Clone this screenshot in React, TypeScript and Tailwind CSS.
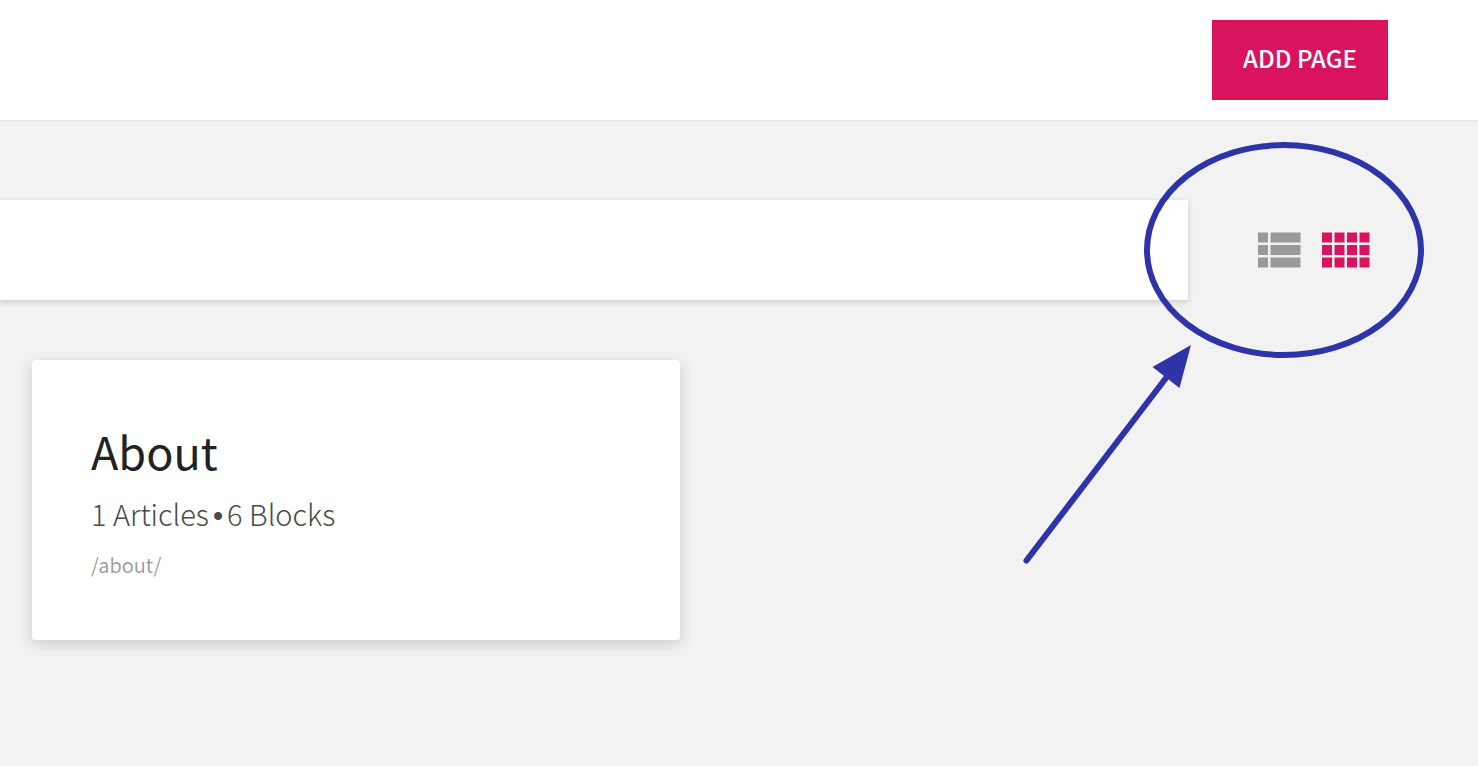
const pages = [
  { title: "About", articles: 1, blocks: 6, path: "/about/" },
];

function ListIcon() {
  return (
    <svg viewBox="0 0 24 24" className="size-[60px] fill-current" aria-hidden="true">
      <path d="M4 14h4v-4H4v4zm0 5h4v-4H4v4zM4 9h4V5H4v4zm5 5h12v-4H9v4zm0 5h12v-4H9v4zM9 5v4h12V5H9z" />
    </svg>
  );
}

function GridIcon() {
  return (
    <svg viewBox="0 0 24 24" className="size-[60px] fill-current" aria-hidden="true">
      <path
        transform="translate(0.2 0)"
        d="M3 9h4V5H3v4zm0 5h4v-4H3v4zm5 0h4v-4H8v4zm5 0h4v-4h-4v4zM8 9h4V5H8v4zm5-4v4h4V5h-4zm5 9h4v-4h-4v4zM3 19h4v-4H3v4zm5 0h4v-4H8v4zm5 0h4v-4h-4v4zm5 0h4v-4h-4v4zm0-14v4h4V5h-4z"
      />
    </svg>
  );
}

/* Circle and arrow pointing out the view switcher */
function Annotation() {
  return (
    <svg
      viewBox="0 0 420 440"
      className="absolute top-[10px] right-12 w-[420px] h-[440px] pointer-events-none"
      fill="none"
      aria-hidden="true"
    >
      <ellipse cx="274" cy="120" rx="137" ry="105" stroke="#2e34a8" strokeWidth="6" />
      <path d="M16.5 430.5L156 248" stroke="#2e34a8" strokeWidth="6" strokeLinecap="round" />
      <path d="M181 215L142.500 237L169.500 258z" fill="#2e34a8" />
    </svg>
  );
}

export default function App() {
  return (
    <div className="min-h-screen bg-[#f2f2f2] font-['Noto_Sans_CJK_SC',sans-serif]">
      <header className="flex h-[120px] items-center justify-end bg-white pr-[90px] shadow-[0_2px_0_#e9e9e9]">
        <button
          type="button"
          className="h-20 w-44 bg-[#da135e] pb-1 text-2xl font-medium text-white"
        >
          ADD PAGE
        </button>
      </header>

      <main className="relative pt-20">
        <div className="flex items-center gap-[60px] pr-[104px]">
          <input
            type="text"
            aria-label="Search pages"
            className="h-[100px] min-w-0 flex-1 bg-white px-8 text-3xl outline-none shadow-[0_2px_6px_rgba(0,0,0,0.17)]"
          />
          <div className="flex gap-[6px]">
            <button type="button" aria-label="List view" className="text-[#999999]">
              <ListIcon />
            </button>
            <button type="button" aria-label="Grid view" className="text-[#da135e]">
              <GridIcon />
            </button>
          </div>
        </div>

        <div className="mt-[60px] px-8">
          {pages.map((page) => (
            <article
              key={page.path}
              className="h-[280px] max-w-[648px] rounded bg-white px-[59px] pt-[61px] shadow-[0_4px_14px_rgba(0,0,0,0.16)]"
            >
              <h2 className="text-[45px] leading-[60px] text-[#222222]">{page.title}</h2>
              <p className="text-[29px] leading-[64px] font-light text-[#4a4a4a]">
                {page.articles} Articles
                <span className="mx-1 font-['Liberation_Sans']">•</span>
                {page.blocks} Blocks
              </p>
              <p className="text-xl leading-[34px] font-[350] text-[#999999]">{page.path}</p>
            </article>
          ))}
        </div>

        <Annotation />
      </main>
    </div>
  );
}
